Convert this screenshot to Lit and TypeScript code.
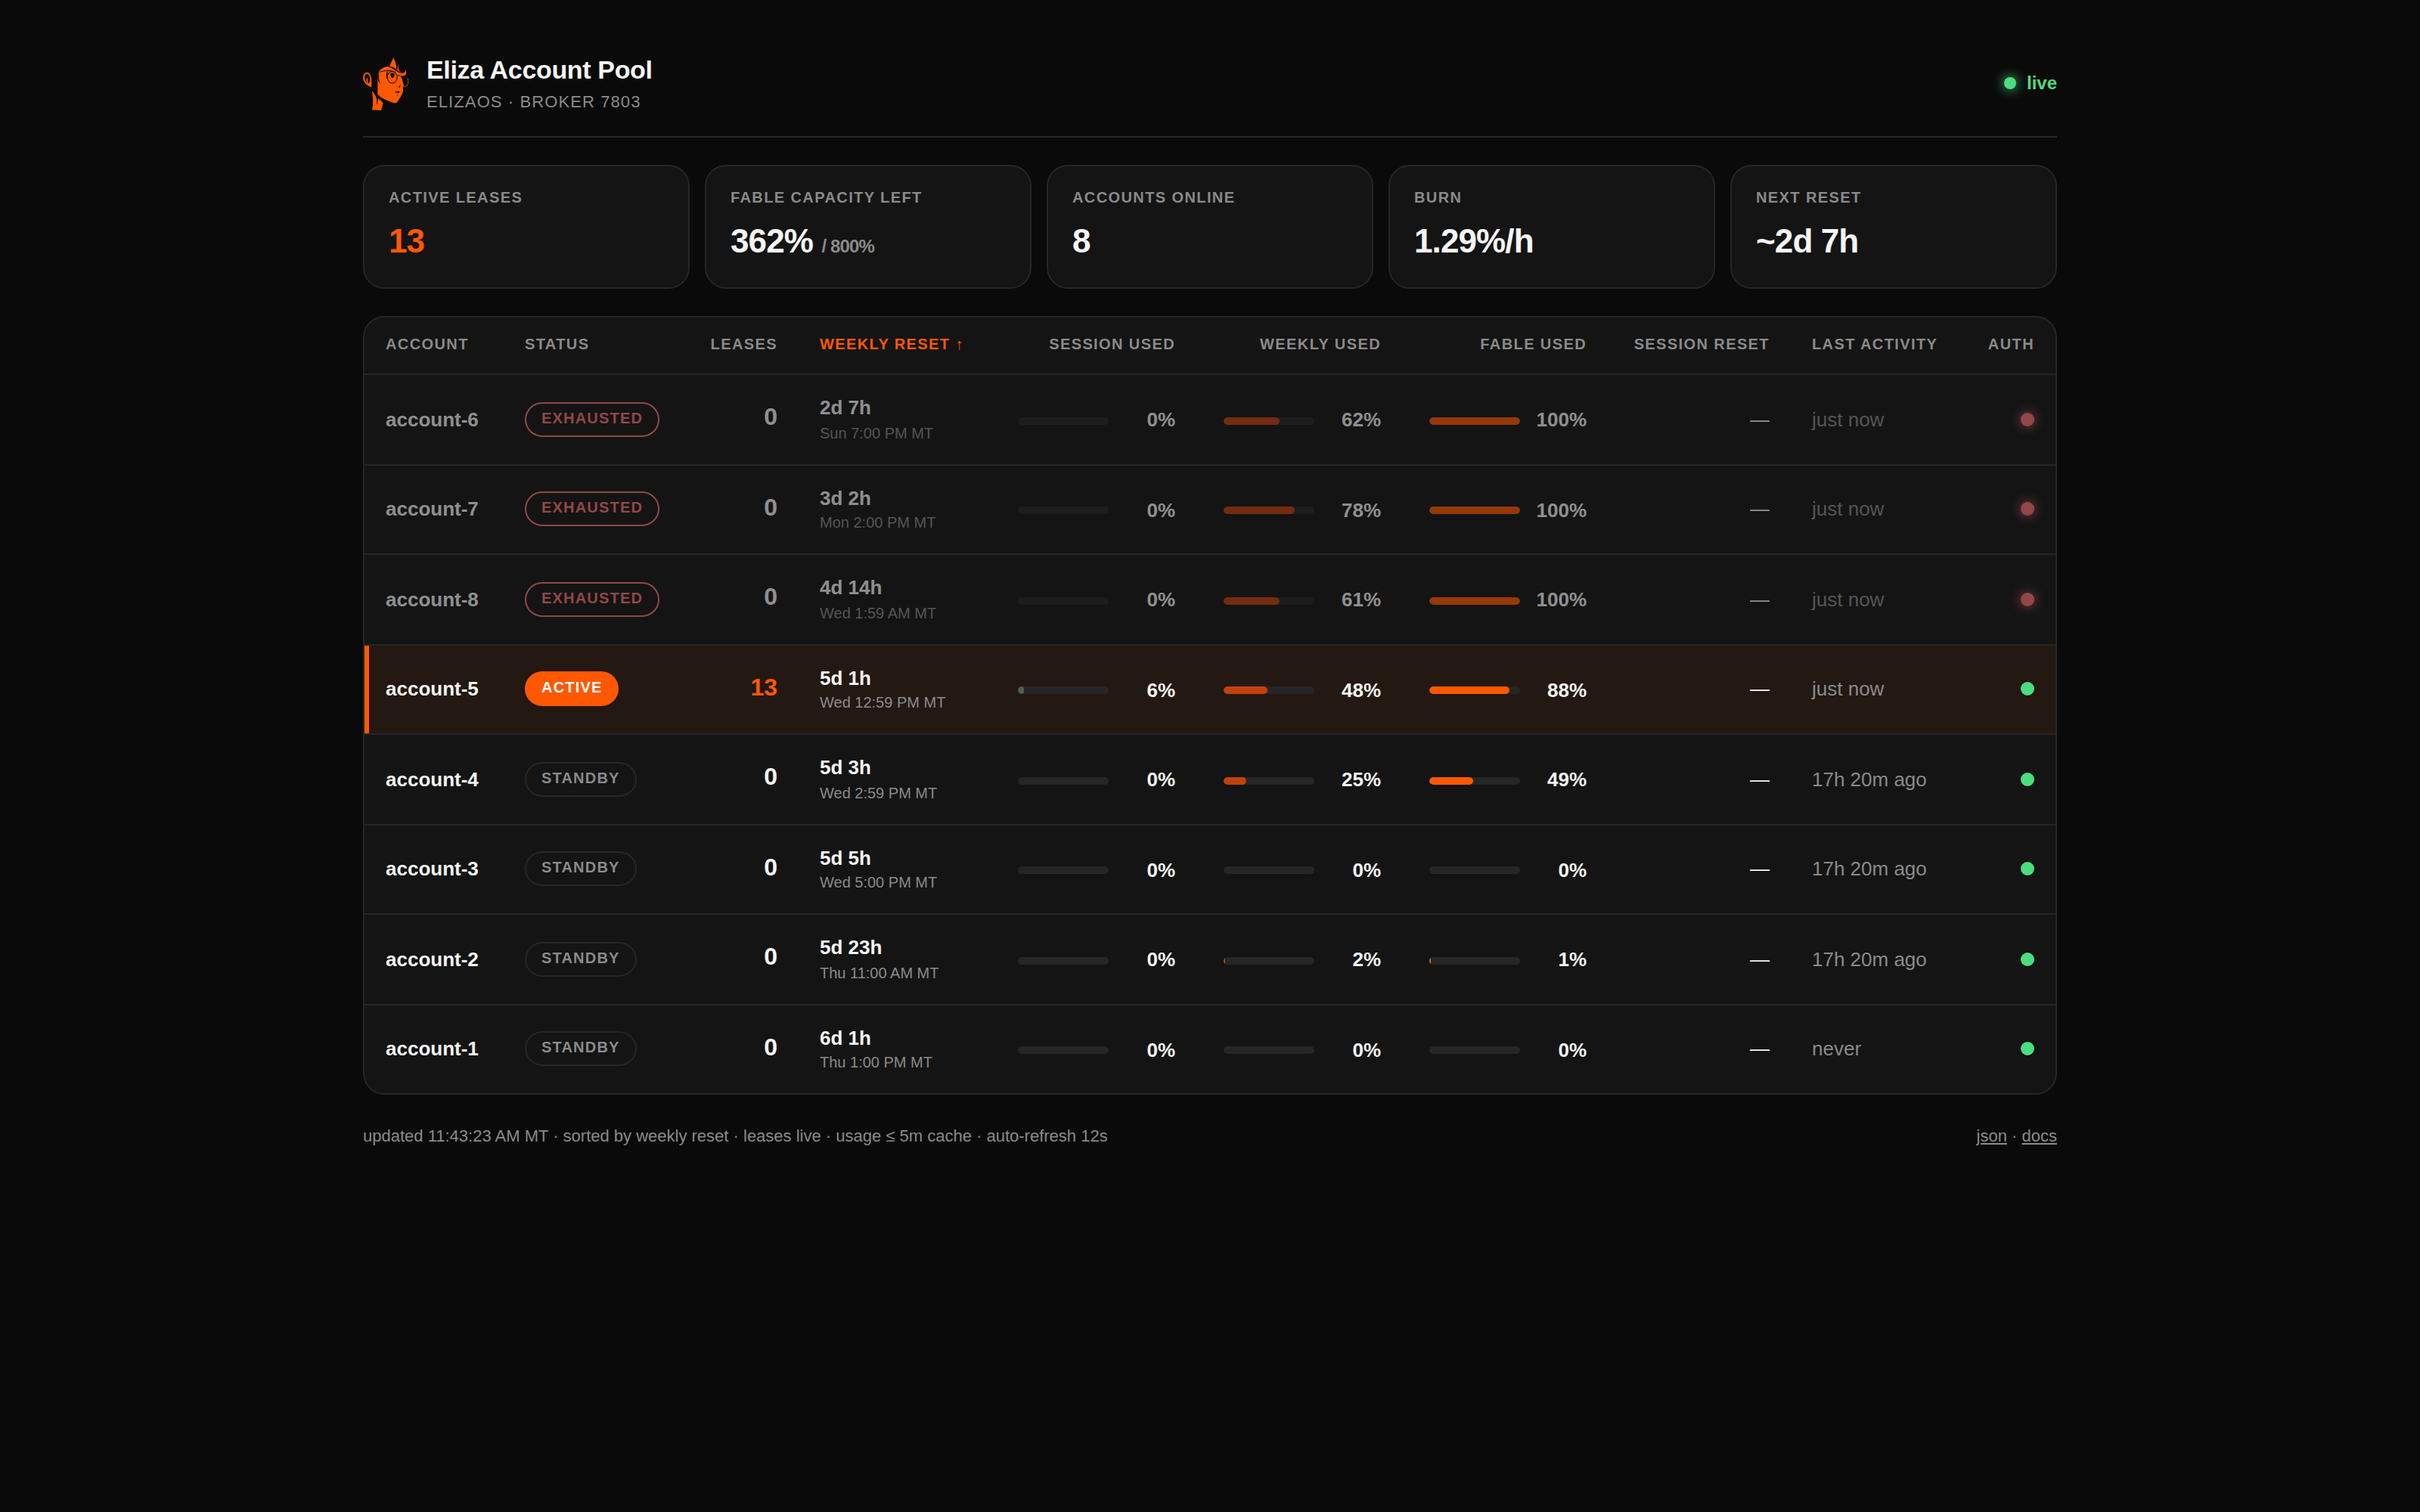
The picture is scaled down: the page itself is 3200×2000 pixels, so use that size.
import { LitElement, css, html, svg } from 'lit'
import { customElement, property } from 'lit/decorators.js'
import { classMap } from 'lit/directives/class-map.js'

type Status = 'exhausted' | 'active' | 'standby'

interface Account {
  name: string
  status: Status
  leases: number
  reset: string
  resetAt: string
  session: number
  weekly: number
  fable: number
  last: string
}

const ACCOUNTS: Account[] = [
  { name: 'account-6', status: 'exhausted', leases: 0, reset: '2d 7h', resetAt: 'Sun 7:00 PM MT', session: 0, weekly: 62, fable: 100, last: 'just now' },
  { name: 'account-7', status: 'exhausted', leases: 0, reset: '3d 2h', resetAt: 'Mon 2:00 PM MT', session: 0, weekly: 78, fable: 100, last: 'just now' },
  { name: 'account-8', status: 'exhausted', leases: 0, reset: '4d 14h', resetAt: 'Wed 1:59 AM MT', session: 0, weekly: 61, fable: 100, last: 'just now' },
  { name: 'account-5', status: 'active', leases: 13, reset: '5d 1h', resetAt: 'Wed 12:59 PM MT', session: 6, weekly: 48, fable: 88, last: 'just now' },
  { name: 'account-4', status: 'standby', leases: 0, reset: '5d 3h', resetAt: 'Wed 2:59 PM MT', session: 0, weekly: 25, fable: 49, last: '17h 20m ago' },
  { name: 'account-3', status: 'standby', leases: 0, reset: '5d 5h', resetAt: 'Wed 5:00 PM MT', session: 0, weekly: 0, fable: 0, last: '17h 20m ago' },
  { name: 'account-2', status: 'standby', leases: 0, reset: '5d 23h', resetAt: 'Thu 11:00 AM MT', session: 0, weekly: 2, fable: 1, last: '17h 20m ago' },
  { name: 'account-1', status: 'standby', leases: 0, reset: '6d 1h', resetAt: 'Thu 1:00 PM MT', session: 0, weekly: 0, fable: 0, last: 'never' },
]

const logo = svg`
  <g fill="#ff5800">
    <path d="M45 107C35 108 29 119 30 132C32 146 45 161 64 166V133C60 117 55 107 45 107Z"/>
    <path d="M66 181C76 193 82 202 84 212C86 222 84 230 85 236C89 228 88 219 91 210C97 217 105 221 109 229C109 239 104 246 102 258L66 256C71 237 70 210 66 181Z"/>
    <path d="M150 48C147 62 138 71 136 83C122 83 104 89 95 101L93 108L88 116V194C98 206 118 217 140 224C152 228 160 231 164 227C172 215 184 199 188 186C191 178 186 170 189 164L192 154L186 128C182 124 180 122 177 121C187 123 196 121 201 114L201 96C197 107 191 111 184 110C176 107 170 99 170 76C166 82 168 91 166 99C163 95 161 90 162 84C162 71 155 60 150 48Z"/>
  </g>
  <g fill="#0a0a0a">
    <path d="M46 113C39 113 35 122 37 132C38 140 42 146 46 149C43 140 42 134 46 129C52 133 48 142 50 151C57 148 60 134 57 125C54 117 51 113 46 113Z"/>
    <path d="M92 108C104 101 125 97 138 99C148 100 157 104 163 109C151 105 141 102 129 102C115 102 103 105 92 108Z"/>
    <path d="M126 84C139 82 151 86 164 97C170 103 177 107 185 111C172 109 163 104 154 97C146 90 138 86 126 84Z"/>
    <path d="M136 116C141 109 151 109 158 115L154 117C156 125 150 131 145 129C140 127 139 121 141 116Z"/>
    <path d="M181 129C189 127 198 130 206 132L202 139C207 146 206 156 200 160C192 160 188 151 187 141C188 134 185 132 181 129Z"/>
    <path d="M153 187C161 183 168 180 177 184L171 189C165 186 160 186 153 187ZM165 197L170 196L167 200ZM170 165C175 161 178 157 181 153C179 160 176 163 177 168Z"/>
    <path d="M88 132C90 142 94 149 99 153C95 144 91 129 94 111L88 116Z"/>
  </g>
  <g fill="none" stroke="#0a0a0a" stroke-width="3">
    <ellipse cx="146" cy="127" rx="19.5" ry="23"/>
    <path d="M166 121C174 117 180 121 184 128"/>
    <path d="M127 104C124 112 124 120 126 131" stroke-width="4"/>
  </g>
  <path d="M206 130C211 142 210 154 202 162C198 166 192 165 189 161" fill="none" stroke="#ff5800" stroke-width="2.4"/>
`

@customElement('stat-card')
export class StatCard extends LitElement {
  @property() label = ''
  @property() value = ''
  @property() total = ''
  @property({ type: Boolean }) accent = false

  render() {
    return html`
      <div class="label">${this.label}</div>
      <div class=${classMap({ value: true, accent: this.accent })}>
        ${this.value} ${this.total ? html`<span class="total">/ ${this.total}</span>` : ''}
      </div>
    `
  }

  static styles = css`
    :host {
      display: block;
      box-sizing: border-box;
      height: 82px;
      padding: 14px 16px;
      background: #141414;
      border: 1px solid #262626;
      border-radius: 14px;
    }
    .label {
      font-size: 10px;
      font-weight: 600;
      line-height: 13px;
      letter-spacing: 0.07em;
      text-transform: uppercase;
      color: #8a8a8a;
    }
    .value {
      margin-top: 9px;
      font-size: 22px;
      font-weight: 700;
      line-height: 28px;
      letter-spacing: -0.02em;
      white-space: nowrap;
    }
    .accent {
      color: #ff5800;
    }
    .total {
      font-size: 12px;
      font-weight: 600;
      color: #8a8a8a;
    }
  `
}

@customElement('usage-bar')
export class UsageBar extends LitElement {
  @property({ type: Number }) value = 0
  @property() kind = 'session'

  render() {
    return html`
      <div class="usage">
        <div class="track"><div class="fill ${this.kind}" style="width:${this.value}%"></div></div>
        <span class="pct">${this.value}%</span>
      </div>
    `
  }

  static styles = css`
    :host {
      display: block;
    }
    .usage {
      display: flex;
      align-items: center;
      justify-content: flex-end;
      gap: 8px;
      padding-top: 1px;
    }
    .track {
      width: 60px;
      height: 5px;
      margin-top: 1px;
      border-radius: 3px;
      background: #262626;
      overflow: hidden;
    }
    .fill {
      height: 100%;
      border-radius: 3px;
    }
    .session {
      background: #5a5a5a;
    }
    .weekly {
      background: #c2410c;
    }
    .fable {
      background: #ff5800;
    }
    .pct {
      width: 36px;
      text-align: right;
      font-weight: 600;
      line-height: 15px;
    }
  `
}

@customElement('app-root')
export class AppRoot extends LitElement {
  renderRow(a: Account) {
    return html`
      <tr class=${a.status}>
        <td><div class="cell name">${a.name}</div></td>
        <td><div class="cell"><span class="pill">${a.status}</span></div></td>
        <td class="num"><div class="cell leases">${a.leases}</div></td>
        <td>
          <div class="cell weekly-reset">
            <div class="reset">${a.reset}</div>
            <div class="reset-at">${a.resetAt}</div>
          </div>
        </td>
        <td class="num"><usage-bar class="cell" kind="session" .value=${a.session}></usage-bar></td>
        <td class="num"><usage-bar class="cell" kind="weekly" .value=${a.weekly}></usage-bar></td>
        <td class="num"><usage-bar class="cell" kind="fable" .value=${a.fable}></usage-bar></td>
        <td class="num"><div class="cell">—</div></td>
        <td><div class="cell last">${a.last}</div></td>
        <td class="num"><div class="cell auth"><span class="dot"></span></div></td>
      </tr>
    `
  }

  render() {
    return html`
      <div class="page">
        <header class="header">
          <svg class="logo" viewBox="30 48 180 210">${logo}</svg>
          <div class="brand">
            <div class="title">Eliza Account Pool</div>
            <div class="subtitle">elizaOS · broker 7803</div>
          </div>
          <div class="live"><span class="live-dot"></span>live</div>
        </header>

        <section class="cards">
          <stat-card label="Active leases" value="13" accent></stat-card>
          <stat-card label="Fable capacity left" value="362%" total="800%"></stat-card>
          <stat-card label="Accounts online" value="8"></stat-card>
          <stat-card label="Burn" value="1.29%/h"></stat-card>
          <stat-card label="Next reset" value="~2d 7h"></stat-card>
        </section>

        <div class="panel">
          <table class="table">
            <colgroup>
              <col class="c-account" /><col class="c-status" /><col class="c-leases" /><col class="c-reset" />
              <col class="c-used" /><col class="c-used" /><col class="c-used" />
              <col class="c-session" /><col class="c-last" /><col />
            </colgroup>
            <thead>
              <tr>
                <th>Account</th>
                <th>Status</th>
                <th class="num">Leases</th>
                <th class="sorted">Weekly reset ↑</th>
                <th class="num">Session used</th>
                <th class="num">Weekly used</th>
                <th class="num">Fable used</th>
                <th class="num">Session reset</th>
                <th>Last activity</th>
                <th class="num">Auth</th>
              </tr>
            </thead>
            <tbody>${ACCOUNTS.map((a) => this.renderRow(a))}</tbody>
          </table>
        </div>

        <footer class="footer">
          <span>updated 11:43:23 AM MT · sorted by weekly reset · leases live · usage ≤ 5m cache · auto-refresh 12s</span>
          <span><a class="link">json</a> · <a class="link">docs</a></span>
        </footer>
      </div>
    `
  }

  static styles = css`
    :host {
      display: block;
      width: 3200px;
      height: 2000px;
      overflow: hidden;
      background: #0a0a0a;
    }
    /* laid out at 1600x1000 and shown at double size */
    .page {
      box-sizing: border-box;
      width: 1600px;
      height: 1000px;
      padding: 36px 240px 0;
      transform: scale(2);
      transform-origin: 0 0;
      background: #0a0a0a;
      color: #f5f5f5;
      font-family: 'Liberation Sans', Arial, sans-serif;
      font-size: 13px;
      line-height: 15px;
    }

    .header {
      display: flex;
      align-items: center;
      gap: 12px;
      box-sizing: border-box;
      height: 55px;
      padding-bottom: 16px;
      border-bottom: 1px solid #262626;
    }
    .logo {
      width: 30px;
      height: 35px;
      margin-top: 1px;
    }
    .title {
      padding-top: 1px;
      font-size: 17px;
      font-weight: 700;
      line-height: 20px;
      letter-spacing: -0.01em;
    }
    .subtitle {
      margin-top: 3px;
      font-size: 11px;
      line-height: 14px;
      letter-spacing: 0.05em;
      text-transform: uppercase;
      color: #8a8a8a;
    }
    .live {
      display: flex;
      align-items: center;
      gap: 7px;
      margin-left: auto;
      font-size: 12px;
      font-weight: 600;
      color: #4ade80;
    }
    .live-dot {
      width: 8px;
      height: 8px;
      border-radius: 50%;
      background: #4ade80;
      box-shadow: 0 0 8px #4ade80;
    }

    .cards {
      display: grid;
      grid-template-columns: repeat(5, 1fr);
      gap: 10px;
      margin-top: 18px;
    }

    .panel {
      margin-top: 18px;
      border: 1px solid #262626;
      border-radius: 14px;
      background: #141414;
      overflow: hidden;
    }
    .table {
      width: 100%;
      table-layout: fixed;
      border-collapse: separate;
      border-spacing: 0;
    }
    .c-account { width: 92px; }
    .c-status { width: 117px; }
    .c-leases { width: 78px; }
    .c-reset { width: 127px; }
    .c-used { width: 136px; }
    .c-session { width: 121px; }
    .c-last { width: 107px; }

    th,
    td {
      box-sizing: border-box;
      padding: 0 14px;
      text-align: left;
      vertical-align: middle;
      white-space: nowrap;
      border-bottom: 1px solid #262626;
    }
    th {
      height: 38px;
      padding-bottom: 2px;
      font-size: 10px;
      font-weight: 600;
      line-height: 12px;
      letter-spacing: 0.07em;
      text-transform: uppercase;
      color: #8a8a8a;
    }
    td {
      height: 59.5px;
    }
    tbody tr:last-child td {
      height: 58.5px;
      border-bottom: 0;
    }
    .num {
      text-align: right;
    }
    .sorted {
      color: #ff5800;
    }
    .name,
    .reset {
      font-weight: 600;
    }
    .pill {
      display: block;
      width: fit-content;
      box-sizing: border-box;
      height: 23px;
      padding: 0 10px;
      border: 1px solid #262626;
      border-radius: 999px;
      font-size: 10px;
      font-weight: 700;
      line-height: 20px;
      letter-spacing: 0.06em;
      text-transform: uppercase;
      color: #8a8a8a;
    }
    .leases {
      padding-bottom: 2px;
      font-size: 16px;
      font-weight: 700;
      line-height: 18px;
    }
    .weekly-reset {
      padding-top: 0.5px;
    }
    .reset-at {
      margin-top: 3.5px;
      font-size: 10px;
      line-height: 12px;
      color: #8a8a8a;
    }
    .last {
      color: #8a8a8a;
    }
    .auth {
      display: flex;
      justify-content: flex-end;
    }
    .dot {
      width: 9px;
      height: 9px;
      border-radius: 50%;
      background: #4ade80;
    }

    .exhausted .cell {
      opacity: 0.55;
    }
    .exhausted .pill {
      border-color: #f87171;
      color: #f87171;
    }
    .exhausted .dot {
      background: #f87171;
      box-shadow: 0 0 8px #f87171;
    }
    .active td {
      background: rgba(255, 88, 0, 0.07);
    }
    .active td:first-child {
      box-shadow: inset 3px 0 0 #ff5800;
    }
    .active .pill {
      border-color: #ff5800;
      background: #ff5800;
      color: #fff;
    }
    .active .leases {
      color: #ff5800;
    }

    .footer {
      display: flex;
      justify-content: space-between;
      margin-top: 20px;
      font-size: 11px;
      line-height: 14px;
      color: #8a8a8a;
    }
    .link {
      text-decoration: underline;
    }
  `
}
